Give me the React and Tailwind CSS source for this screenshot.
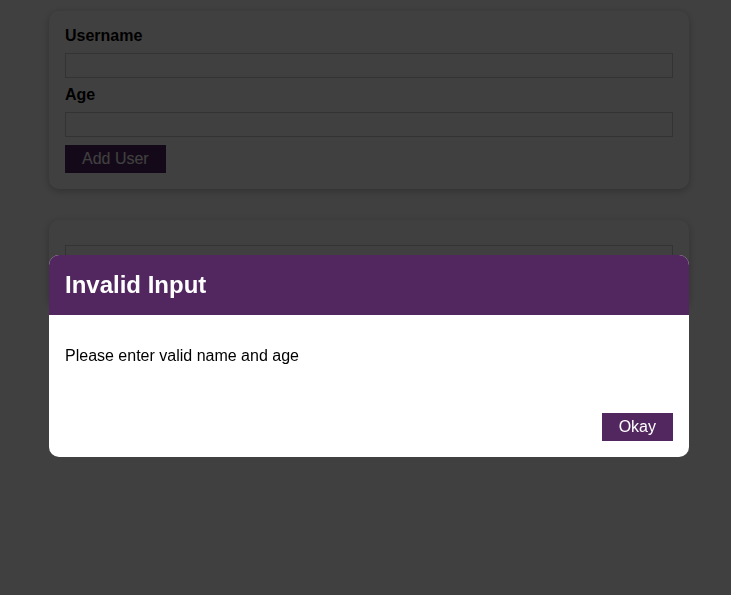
import React from "react";

export default function App() {
  return (
    <div
      className="min-h-[595px] bg-white pl-[7px]"
      style={{ fontFamily: '"Liberation Sans", Arial, sans-serif' }}
    >
      <div className="h-[11px]" />
      <div className="mx-auto w-[640px] rounded-[10px] bg-white p-4 shadow-[0_2px_8px_rgba(0,0,0,0.26)]">
        <label className="mb-2 block text-base leading-[18px] font-bold text-black">Username</label>
        <input className="mb-2 block h-[25px] w-full border border-[#ccc] px-[2px]" />
        <label className="mb-2 block text-base leading-[18px] font-bold text-black">Age</label>
        <input className="mb-2 block h-[25px] w-full border border-[#ccc] px-[2px]" />
        <button className="h-[28px] border border-[#52275f] bg-[#52275f] px-4 text-base leading-[18px] text-white">
          Add User
        </button>
      </div>
      <div className="mx-auto mt-[31px] w-[640px] rounded-[10px] bg-white px-4 py-[25px] shadow-[0_2px_8px_rgba(0,0,0,0.26)]">
        <ul>
          <li className="h-[36px] border border-[#ccc]" />
        </ul>
      </div>

      <div className="fixed inset-0 z-10 bg-black/75" />
      <div className="fixed left-[49px] top-[255px] z-20 w-[640px] overflow-hidden rounded-[10px] bg-white">
        <header className="bg-[#52275f] p-4">
          <h2 className="m-0 text-2xl leading-[28px] font-bold text-white">Invalid Input</h2>
        </header>
        <div className="p-4">
          <p className="my-4 text-base leading-[18px] text-black">Please enter valid name and age</p>
        </div>
        <footer className="flex justify-end p-4">
          <button className="h-[28px] border border-[#52275f] bg-[#52275f] px-4 text-base leading-[18px] text-white">
            Okay
          </button>
        </footer>
      </div>
    </div>
  );
}
